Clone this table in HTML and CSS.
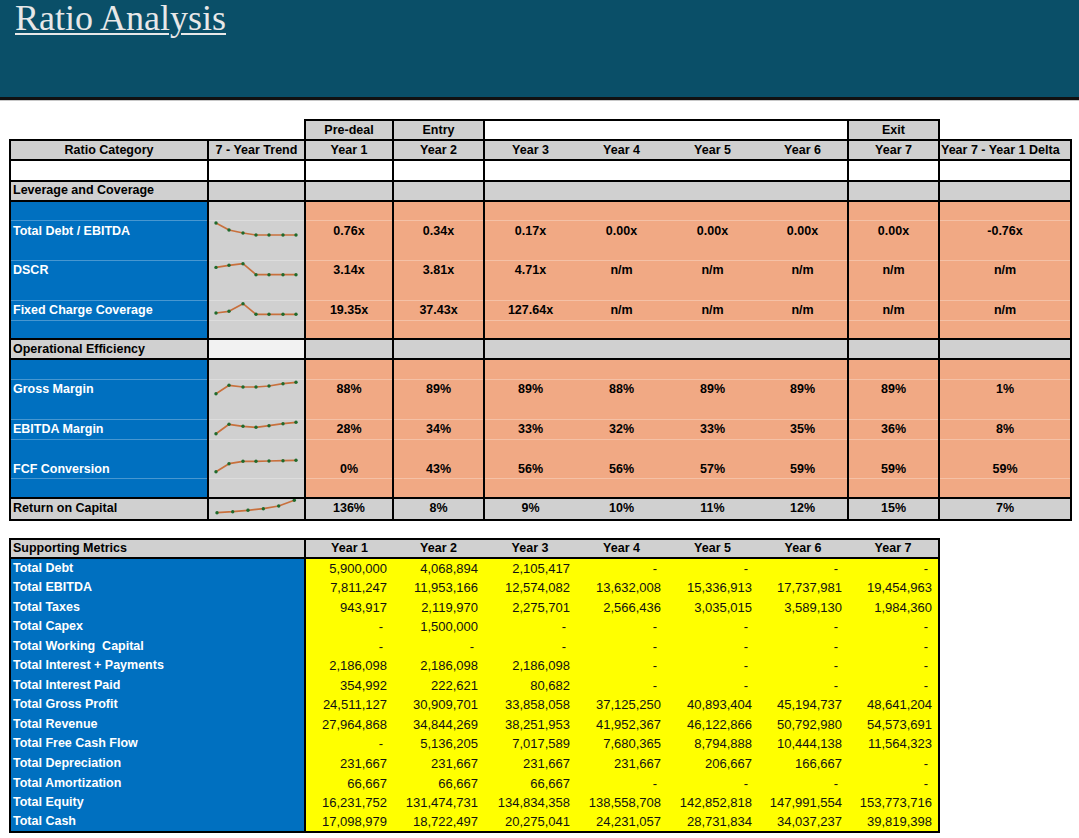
FILE: index.html
```html
<!DOCTYPE html>
<html lang="en">
<head>
<meta charset="utf-8">
<title>Ratio Analysis</title>
<link rel="stylesheet" href="styles.css">
</head>
<body>
<header class="banner"><h1 class="title">Ratio Analysis</h1></header>

<table class="ratios">
  <colgroup>
    <col class="w-cat"><col class="w-trend"><col class="w-y1"><col class="w-y2">
    <col class="w-y3"><col class="w-y4"><col class="w-y5"><col class="w-y6">
    <col class="w-y7"><col class="w-delta">
  </colgroup>
  <tr class="top">
    <td class="none"></td><td class="none"></td>
    <td class="box gray">Pre-deal</td><td class="box gray">Entry</td>
    <td class="box white" colspan="4"></td>
    <td class="box gray">Exit</td><td class="none"></td>
  </tr>
  <tr class="f bd gray hdr">
    <td>Ratio Category</td><td>7 - Year Trend</td><td>Year 1</td><td>Year 2</td>
    <td>Year 3</td><td>Year 4</td><td>Year 5</td><td>Year 6</td><td>Year 7</td><td class="delta">Year 7 - Year 1 Delta</td>
  </tr>
  <tr class="f bd white"><td></td><td></td><td></td><td></td><td></td><td></td><td></td><td></td><td></td><td></td></tr>
  <tr class="f bd gray sec"><td>Leverage and Coverage</td><td></td><td></td><td></td><td></td><td></td><td></td><td></td><td></td><td></td></tr>

  <tr class="f blk"><td></td><td></td><td></td><td></td><td></td><td></td><td></td><td></td><td></td><td></td></tr>
  <tr class="f blk ln">
    <td>Total Debt / EBITDA</td>
    <td class="spark"><svg viewBox="0 0 95 20" width="95" height="20"><polyline points="7,3 20,10 34,13 47,15 60,15 74,15 87,15"/><g><circle cx="7" cy="3" r="1.7"/><circle cx="20" cy="10" r="1.7"/><circle cx="34" cy="13" r="1.7"/><circle cx="47" cy="15" r="1.7"/><circle cx="60" cy="15" r="1.7"/><circle cx="74" cy="15" r="1.7"/><circle cx="87" cy="15" r="1.7"/></g></svg></td>
    <td>0.76x</td><td>0.34x</td><td>0.17x</td><td>0.00x</td><td>0.00x</td><td>0.00x</td><td>0.00x</td><td>-0.76x</td>
  </tr>
  <tr class="f blk"><td></td><td></td><td></td><td></td><td></td><td></td><td></td><td></td><td></td><td></td></tr>
  <tr class="f blk ln">
    <td>DSCR</td>
    <td class="spark"><svg viewBox="0 0 95 20" width="95" height="20"><polyline points="7,7.4 20,5.3 34,3.7 47,14.7 60,14.7 74,14.7 87,14.7"/><g><circle cx="7" cy="7.4" r="1.7"/><circle cx="20" cy="5.3" r="1.7"/><circle cx="34" cy="3.7" r="1.7"/><circle cx="47" cy="14.7" r="1.7"/><circle cx="60" cy="14.7" r="1.7"/><circle cx="74" cy="14.7" r="1.7"/><circle cx="87" cy="14.7" r="1.7"/></g></svg></td>
    <td>3.14x</td><td>3.81x</td><td>4.71x</td><td>n/m</td><td>n/m</td><td>n/m</td><td>n/m</td><td>n/m</td>
  </tr>
  <tr class="f blk"><td></td><td></td><td></td><td></td><td></td><td></td><td></td><td></td><td></td><td></td></tr>
  <tr class="f blk ln">
    <td>Fixed Charge Coverage</td>
    <td class="spark"><svg viewBox="0 0 95 20" width="95" height="20"><polyline points="7,13 20,11.3 34,3.7 47,14.3 60,14.3 74,14.3 87,14.3"/><g><circle cx="7" cy="13" r="1.7"/><circle cx="20" cy="11.3" r="1.7"/><circle cx="34" cy="3.7" r="1.7"/><circle cx="47" cy="14.3" r="1.7"/><circle cx="60" cy="14.3" r="1.7"/><circle cx="74" cy="14.3" r="1.7"/><circle cx="87" cy="14.3" r="1.7"/></g></svg></td>
    <td>19.35x</td><td>37.43x</td><td>127.64x</td><td>n/m</td><td>n/m</td><td>n/m</td><td>n/m</td><td>n/m</td>
  </tr>
  <tr class="f blk ln"><td></td><td></td><td></td><td></td><td></td><td></td><td></td><td></td><td></td><td></td></tr>

  <tr class="f bd gray sec op"><td>Operational Efficiency</td><td></td><td></td><td></td><td></td><td></td><td></td><td></td><td></td><td></td></tr>

  <tr class="f blk"><td></td><td></td><td></td><td></td><td></td><td></td><td></td><td></td><td></td><td></td></tr>
  <tr class="f blk ln">
    <td>Gross Margin</td>
    <td class="spark"><svg viewBox="0 0 95 20" width="95" height="20"><polyline points="7,14.7 20,6.3 34,8 47,8 60,7 74,4.7 87,3.3"/><g><circle cx="7" cy="14.7" r="1.7"/><circle cx="20" cy="6.3" r="1.7"/><circle cx="34" cy="8" r="1.7"/><circle cx="47" cy="8" r="1.7"/><circle cx="60" cy="7" r="1.7"/><circle cx="74" cy="4.7" r="1.7"/><circle cx="87" cy="3.3" r="1.7"/></g></svg></td>
    <td>88%</td><td>89%</td><td>89%</td><td>88%</td><td>89%</td><td>89%</td><td>89%</td><td>1%</td>
  </tr>
  <tr class="f blk"><td></td><td></td><td></td><td></td><td></td><td></td><td></td><td></td><td></td><td></td></tr>
  <tr class="f blk ln">
    <td>EBITDA Margin</td>
    <td class="spark"><svg viewBox="0 0 95 20" width="95" height="20"><polyline points="7,14.7 20,5.3 34,7.3 47,8.3 60,6.7 74,4.7 87,3.3"/><g><circle cx="7" cy="14.7" r="1.7"/><circle cx="20" cy="5.3" r="1.7"/><circle cx="34" cy="7.3" r="1.7"/><circle cx="47" cy="8.3" r="1.7"/><circle cx="60" cy="6.7" r="1.7"/><circle cx="74" cy="4.7" r="1.7"/><circle cx="87" cy="3.3" r="1.7"/></g></svg></td>
    <td>28%</td><td>34%</td><td>33%</td><td>32%</td><td>33%</td><td>35%</td><td>36%</td><td>8%</td>
  </tr>
  <tr class="f blk ln"><td></td><td></td><td></td><td></td><td></td><td></td><td></td><td></td><td></td><td></td></tr>
  <tr class="f blk">
    <td>FCF Conversion</td>
    <td class="spark"><svg viewBox="0 0 95 20" width="95" height="20"><polyline points="7,13.7 20,5.7 34,3.3 47,3.3 60,3 74,2.7 87,2.3"/><g><circle cx="7" cy="13.7" r="1.7"/><circle cx="20" cy="5.7" r="1.7"/><circle cx="34" cy="3.3" r="1.7"/><circle cx="47" cy="3.3" r="1.7"/><circle cx="60" cy="3" r="1.7"/><circle cx="74" cy="2.7" r="1.7"/><circle cx="87" cy="2.3" r="1.7"/></g></svg></td>
    <td>0%</td><td>43%</td><td>56%</td><td>56%</td><td>57%</td><td>59%</td><td>59%</td><td>59%</td>
  </tr>
  <tr class="f blk ln"><td></td><td></td><td></td><td></td><td></td><td></td><td></td><td></td><td></td><td></td></tr>

  <tr class="f bd gray sec roc">
    <td>Return on Capital</td>
    <td class="spark"><svg viewBox="0 0 95 20" width="95" height="20"><polyline points="8,13.7 23.7,12.7 39,11.3 54.3,9.7 69.7,7 85.3,1.3"/><g><circle cx="8" cy="13.7" r="1.7"/><circle cx="23.7" cy="12.7" r="1.7"/><circle cx="39" cy="11.3" r="1.7"/><circle cx="54.3" cy="9.7" r="1.7"/><circle cx="69.7" cy="7" r="1.7"/><circle cx="85.3" cy="1.3" r="1.7"/></g></svg></td>
    <td>136%</td><td>8%</td><td>9%</td><td>10%</td><td>11%</td><td>12%</td><td>15%</td><td>7%</td>
  </tr>
</table>

<table class="supp">
  <colgroup>
    <col class="w-lab"><col class="w-y1"><col class="w-y2"><col class="w-y3"><col class="w-y4">
    <col class="w-y5"><col class="w-y6"><col class="w-y7">
  </colgroup>
  <tr class="shdr"><td>Supporting Metrics</td><td>Year 1</td><td>Year 2</td><td>Year 3</td><td>Year 4</td><td>Year 5</td><td>Year 6</td><td>Year 7</td></tr>
  <tr><td>Total Debt</td><td>5,900,000</td><td>4,068,894</td><td>2,105,417</td><td class="d">-</td><td class="d">-</td><td class="d">-</td><td class="d">-</td></tr>
  <tr><td>Total EBITDA</td><td>7,811,247</td><td>11,953,166</td><td>12,574,082</td><td>13,632,008</td><td>15,336,913</td><td>17,737,981</td><td>19,454,963</td></tr>
  <tr><td>Total Taxes</td><td>943,917</td><td>2,119,970</td><td>2,275,701</td><td>2,566,436</td><td>3,035,015</td><td>3,589,130</td><td>1,984,360</td></tr>
  <tr><td>Total Capex</td><td class="d">-</td><td>1,500,000</td><td class="d">-</td><td class="d">-</td><td class="d">-</td><td class="d">-</td><td class="d">-</td></tr>
  <tr><td>Total Working&nbsp; Capital</td><td class="d">-</td><td class="d">-</td><td class="d">-</td><td class="d">-</td><td class="d">-</td><td class="d">-</td><td class="d">-</td></tr>
  <tr><td>Total Interest + Payments</td><td>2,186,098</td><td>2,186,098</td><td>2,186,098</td><td class="d">-</td><td class="d">-</td><td class="d">-</td><td class="d">-</td></tr>
  <tr><td>Total Interest Paid</td><td>354,992</td><td>222,621</td><td>80,682</td><td class="d">-</td><td class="d">-</td><td class="d">-</td><td class="d">-</td></tr>
  <tr><td>Total Gross Profit</td><td>24,511,127</td><td>30,909,701</td><td>33,858,058</td><td>37,125,250</td><td>40,893,404</td><td>45,194,737</td><td>48,641,204</td></tr>
  <tr><td>Total Revenue</td><td>27,964,868</td><td>34,844,269</td><td>38,251,953</td><td>41,952,367</td><td>46,122,866</td><td>50,792,980</td><td>54,573,691</td></tr>
  <tr><td>Total Free Cash Flow</td><td class="d">-</td><td>5,136,205</td><td>7,017,589</td><td>7,680,365</td><td>8,794,888</td><td>10,444,138</td><td>11,564,323</td></tr>
  <tr><td>Total Depreciation</td><td>231,667</td><td>231,667</td><td>231,667</td><td>231,667</td><td>206,667</td><td>166,667</td><td class="d">-</td></tr>
  <tr><td>Total Amortization</td><td>66,667</td><td>66,667</td><td>66,667</td><td class="d">-</td><td class="d">-</td><td class="d">-</td><td class="d">-</td></tr>
  <tr><td>Total Equity</td><td>16,231,752</td><td>131,474,731</td><td>134,834,358</td><td>138,558,708</td><td>142,852,818</td><td>147,991,554</td><td>153,773,716</td></tr>
  <tr><td>Total Cash</td><td>17,098,979</td><td>18,722,497</td><td>20,275,041</td><td>24,231,057</td><td>28,731,834</td><td>34,037,237</td><td>39,819,398</td></tr>
</table>
</body>
</html>
```

FILE: styles.css
```css
* { box-sizing: border-box; }

body {
  margin: 0;
  background: #ffffff;
  font-family: "Liberation Sans", Arial, sans-serif;
  color: #000;
}

/* ---------- banner ---------- */
.banner {
  height: 100px;
  background: #0a4f68;
  border-bottom: 3px solid #111;
  box-shadow: 0 1px 0 #c8c8c8;
}
.title {
  margin: 0;
  padding: 0 0 0 15px;
  font: 400 36px/36px "Liberation Serif", "Times New Roman", serif;
  color: #e8e8e8;
  text-decoration: underline;
  text-decoration-thickness: 2px;
  text-underline-offset: 3px;
}

/* ---------- shared table ---------- */
table {
  border-collapse: collapse;
  table-layout: fixed;
  margin-left: 9px;
}
td {
  padding: 0 2px;
  font-weight: 700;
  font-size: 12.5px;
  line-height: 15px;
  white-space: nowrap;
  overflow: hidden;
  text-align: center;
  vertical-align: middle;
}

.w-cat { width: 198px; }
.w-trend { width: 97px; }
.w-lab { width: 295px; }
.w-y1 { width: 88px; }
.w-y2 { width: 91px; }
.w-y3 { width: 92px; }
.w-y4 { width: 91px; }
.w-y5 { width: 91px; }
.w-y6 { width: 90px; }
.w-y7 { width: 91px; }
.w-delta { width: 132px; }

/* ---------- ratios table ---------- */
.ratios {
  width: 1061px;
  margin-top: 19px;
}
.ratios tr { height: 20.2px; }
.ratios tr.blk { height: 19.6px; }
.ratios tr.blk > td { padding-top: 2px; }

.ratios .box { border: 2px solid #000; }
.gray > td, td.gray { background: #d0d0d0; }
.white > td, td.white { background: #ffffff; }

.ratios tr.f > td:nth-child(-n+5),
.ratios tr.f > td:nth-child(9),
.ratios tr.f > td:nth-child(10) { border-left: 2px solid #000; }
.ratios tr.f > td:nth-child(10) { border-right: 2px solid #000; }
.ratios tr.bd > td { border-top: 2px solid #000; border-bottom: 2px solid #000; }

.ratios td.delta { text-align: left; padding-left: 1px; }
.ratios .sec > td:first-child { text-align: left; }
.ratios .op > td:nth-child(2) { background: #f2f2f2; }

.blk > td { background: #f1a984; }
.blk > td:first-child { background: #0070c0; color: #fff; text-align: left; }
.blk > td:nth-child(2) { background: #d0d0d0; }
.ratios tr.ln > td { box-shadow: inset 0 1px 0 rgba(255, 255, 255, 0.28); }

td.spark { padding: 0; }
.ratios tr.blk > td.spark { padding-top: 0; }
.spark svg { display: block; overflow: visible; }
.spark polyline { fill: none; stroke: #c8703d; stroke-width: 1.7; stroke-linejoin: round; }
.spark circle { fill: #1f6a2c; }

/* ---------- supporting metrics ---------- */
.supp {
  width: 929px;
  margin-top: 17px;
}
.supp tr { height: 19.55px; }
.supp td {
  background: #ffff00;
  text-align: right;
  padding-right: 6px;
  font-weight: 400;
  font-size: 13px;
  color: #111;
}
.supp td.d { padding-right: 10px; }
.supp td:first-child {
  background: #0070c0;
  color: #fff;
  text-align: left;
  padding-left: 2px;
  font-weight: 700;
  font-size: 12.5px;
}
.supp td:nth-child(-n+2) { border-left: 2px solid #000; }
.supp td:last-child { border-right: 2px solid #000; }
.supp tr:last-child td { border-bottom: 2px solid #000; }

.supp .shdr td {
  background: #d0d0d0;
  color: #000;
  border-top: 2px solid #000;
  border-bottom: 2px solid #000;
  text-align: center;
  font-weight: 700;
  font-size: 12.5px;
  padding: 0 2px;
}
.supp .shdr td:first-child { text-align: left; }
```
